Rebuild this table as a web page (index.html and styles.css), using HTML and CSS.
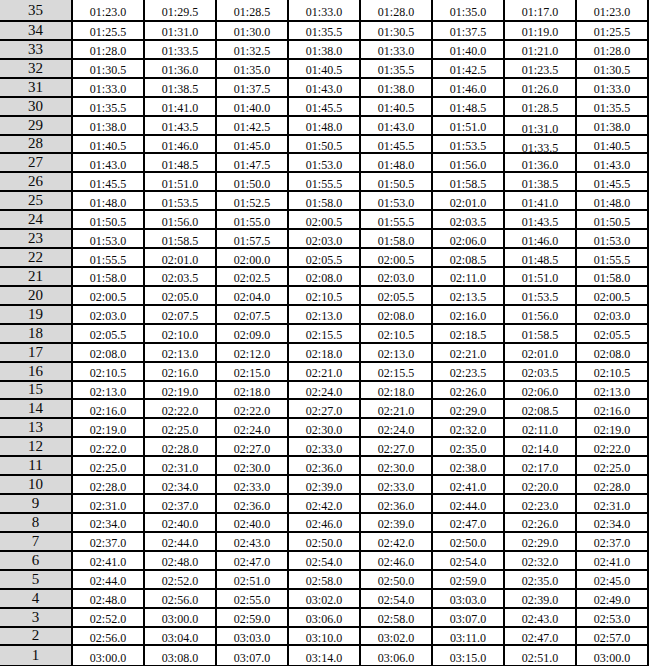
FILE: index.html
```html
<!DOCTYPE html>
<html lang="en">
<head>
<meta charset="utf-8">
<title>Times table</title>
<link rel="stylesheet" href="styles.css">
</head>
<body>
<div class="sheet">
<div class="lbl">35</div><div class="t">01:23.0</div><div class="t">01:29.5</div><div class="t">01:28.5</div><div class="t">01:33.0</div><div class="t">01:28.0</div><div class="t">01:35.0</div><div class="t">01:17.0</div><div class="t">01:23.0</div>
<div class="lbl">34</div><div class="t">01:25.5</div><div class="t">01:31.0</div><div class="t">01:30.0</div><div class="t">01:35.5</div><div class="t">01:30.5</div><div class="t">01:37.5</div><div class="t">01:19.0</div><div class="t">01:25.5</div>
<div class="lbl">33</div><div class="t">01:28.0</div><div class="t">01:33.5</div><div class="t">01:32.5</div><div class="t">01:38.0</div><div class="t">01:33.0</div><div class="t">01:40.0</div><div class="t">01:21.0</div><div class="t">01:28.0</div>
<div class="lbl">32</div><div class="t">01:30.5</div><div class="t">01:36.0</div><div class="t">01:35.0</div><div class="t">01:40.5</div><div class="t">01:35.5</div><div class="t">01:42.5</div><div class="t">01:23.5</div><div class="t">01:30.5</div>
<div class="lbl">31</div><div class="t">01:33.0</div><div class="t">01:38.5</div><div class="t">01:37.5</div><div class="t">01:43.0</div><div class="t">01:38.0</div><div class="t">01:46.0</div><div class="t">01:26.0</div><div class="t">01:33.0</div>
<div class="lbl">30</div><div class="t">01:35.5</div><div class="t">01:41.0</div><div class="t">01:40.0</div><div class="t">01:45.5</div><div class="t">01:40.5</div><div class="t">01:48.5</div><div class="t">01:28.5</div><div class="t">01:35.5</div>
<div class="lbl">29</div><div class="t">01:38.0</div><div class="t">01:43.5</div><div class="t">01:42.5</div><div class="t">01:48.0</div><div class="t">01:43.0</div><div class="t">01:51.0</div><div class="t low">01:31.0</div><div class="t">01:38.0</div>
<div class="lbl">28</div><div class="t">01:40.5</div><div class="t">01:46.0</div><div class="t">01:45.0</div><div class="t">01:50.5</div><div class="t">01:45.5</div><div class="t">01:53.5</div><div class="t low">01:33.5</div><div class="t">01:40.5</div>
<div class="lbl">27</div><div class="t">01:43.0</div><div class="t">01:48.5</div><div class="t">01:47.5</div><div class="t">01:53.0</div><div class="t">01:48.0</div><div class="t">01:56.0</div><div class="t">01:36.0</div><div class="t">01:43.0</div>
<div class="lbl">26</div><div class="t">01:45.5</div><div class="t">01:51.0</div><div class="t">01:50.0</div><div class="t">01:55.5</div><div class="t">01:50.5</div><div class="t">01:58.5</div><div class="t">01:38.5</div><div class="t">01:45.5</div>
<div class="lbl">25</div><div class="t">01:48.0</div><div class="t">01:53.5</div><div class="t">01:52.5</div><div class="t">01:58.0</div><div class="t">01:53.0</div><div class="t">02:01.0</div><div class="t">01:41.0</div><div class="t">01:48.0</div>
<div class="lbl">24</div><div class="t">01:50.5</div><div class="t">01:56.0</div><div class="t">01:55.0</div><div class="t">02:00.5</div><div class="t">01:55.5</div><div class="t">02:03.5</div><div class="t">01:43.5</div><div class="t">01:50.5</div>
<div class="lbl">23</div><div class="t">01:53.0</div><div class="t">01:58.5</div><div class="t">01:57.5</div><div class="t">02:03.0</div><div class="t">01:58.0</div><div class="t">02:06.0</div><div class="t">01:46.0</div><div class="t">01:53.0</div>
<div class="lbl">22</div><div class="t">01:55.5</div><div class="t">02:01.0</div><div class="t">02:00.0</div><div class="t">02:05.5</div><div class="t">02:00.5</div><div class="t">02:08.5</div><div class="t">01:48.5</div><div class="t">01:55.5</div>
<div class="lbl">21</div><div class="t">01:58.0</div><div class="t">02:03.5</div><div class="t">02:02.5</div><div class="t">02:08.0</div><div class="t">02:03.0</div><div class="t">02:11.0</div><div class="t">01:51.0</div><div class="t">01:58.0</div>
<div class="lbl">20</div><div class="t">02:00.5</div><div class="t">02:05.0</div><div class="t">02:04.0</div><div class="t">02:10.5</div><div class="t">02:05.5</div><div class="t">02:13.5</div><div class="t">01:53.5</div><div class="t">02:00.5</div>
<div class="lbl">19</div><div class="t">02:03.0</div><div class="t">02:07.5</div><div class="t">02:07.5</div><div class="t">02:13.0</div><div class="t">02:08.0</div><div class="t">02:16.0</div><div class="t">01:56.0</div><div class="t">02:03.0</div>
<div class="lbl">18</div><div class="t">02:05.5</div><div class="t">02:10.0</div><div class="t">02:09.0</div><div class="t">02:15.5</div><div class="t">02:10.5</div><div class="t">02:18.5</div><div class="t">01:58.5</div><div class="t">02:05.5</div>
<div class="lbl">17</div><div class="t">02:08.0</div><div class="t">02:13.0</div><div class="t">02:12.0</div><div class="t">02:18.0</div><div class="t">02:13.0</div><div class="t">02:21.0</div><div class="t">02:01.0</div><div class="t">02:08.0</div>
<div class="lbl">16</div><div class="t">02:10.5</div><div class="t">02:16.0</div><div class="t">02:15.0</div><div class="t">02:21.0</div><div class="t">02:15.5</div><div class="t">02:23.5</div><div class="t">02:03.5</div><div class="t">02:10.5</div>
<div class="lbl">15</div><div class="t">02:13.0</div><div class="t">02:19.0</div><div class="t">02:18.0</div><div class="t">02:24.0</div><div class="t">02:18.0</div><div class="t">02:26.0</div><div class="t">02:06.0</div><div class="t">02:13.0</div>
<div class="lbl">14</div><div class="t">02:16.0</div><div class="t">02:22.0</div><div class="t">02:22.0</div><div class="t">02:27.0</div><div class="t">02:21.0</div><div class="t">02:29.0</div><div class="t">02:08.5</div><div class="t">02:16.0</div>
<div class="lbl">13</div><div class="t">02:19.0</div><div class="t">02:25.0</div><div class="t">02:24.0</div><div class="t">02:30.0</div><div class="t">02:24.0</div><div class="t">02:32.0</div><div class="t">02:11.0</div><div class="t">02:19.0</div>
<div class="lbl">12</div><div class="t">02:22.0</div><div class="t">02:28.0</div><div class="t">02:27.0</div><div class="t">02:33.0</div><div class="t">02:27.0</div><div class="t">02:35.0</div><div class="t">02:14.0</div><div class="t">02:22.0</div>
<div class="lbl">11</div><div class="t">02:25.0</div><div class="t">02:31.0</div><div class="t">02:30.0</div><div class="t">02:36.0</div><div class="t">02:30.0</div><div class="t">02:38.0</div><div class="t">02:17.0</div><div class="t">02:25.0</div>
<div class="lbl">10</div><div class="t">02:28.0</div><div class="t">02:34.0</div><div class="t">02:33.0</div><div class="t">02:39.0</div><div class="t">02:33.0</div><div class="t">02:41.0</div><div class="t">02:20.0</div><div class="t">02:28.0</div>
<div class="lbl">9</div><div class="t">02:31.0</div><div class="t">02:37.0</div><div class="t">02:36.0</div><div class="t">02:42.0</div><div class="t">02:36.0</div><div class="t">02:44.0</div><div class="t">02:23.0</div><div class="t">02:31.0</div>
<div class="lbl">8</div><div class="t">02:34.0</div><div class="t">02:40.0</div><div class="t">02:40.0</div><div class="t">02:46.0</div><div class="t">02:39.0</div><div class="t">02:47.0</div><div class="t">02:26.0</div><div class="t">02:34.0</div>
<div class="lbl">7</div><div class="t">02:37.0</div><div class="t">02:44.0</div><div class="t">02:43.0</div><div class="t">02:50.0</div><div class="t">02:42.0</div><div class="t">02:50.0</div><div class="t">02:29.0</div><div class="t">02:37.0</div>
<div class="lbl">6</div><div class="t">02:41.0</div><div class="t">02:48.0</div><div class="t">02:47.0</div><div class="t">02:54.0</div><div class="t">02:46.0</div><div class="t">02:54.0</div><div class="t">02:32.0</div><div class="t">02:41.0</div>
<div class="lbl">5</div><div class="t">02:44.0</div><div class="t">02:52.0</div><div class="t">02:51.0</div><div class="t">02:58.0</div><div class="t">02:50.0</div><div class="t">02:59.0</div><div class="t">02:35.0</div><div class="t">02:45.0</div>
<div class="lbl">4</div><div class="t">02:48.0</div><div class="t">02:56.0</div><div class="t">02:55.0</div><div class="t">03:02.0</div><div class="t">02:54.0</div><div class="t">03:03.0</div><div class="t">02:39.0</div><div class="t">02:49.0</div>
<div class="lbl">3</div><div class="t">02:52.0</div><div class="t">03:00.0</div><div class="t">02:59.0</div><div class="t">03:06.0</div><div class="t">02:58.0</div><div class="t">03:07.0</div><div class="t">02:43.0</div><div class="t">02:53.0</div>
<div class="lbl">2</div><div class="t">02:56.0</div><div class="t">03:04.0</div><div class="t">03:03.0</div><div class="t">03:10.0</div><div class="t">03:02.0</div><div class="t">03:11.0</div><div class="t">02:47.0</div><div class="t">02:57.0</div>
<div class="lbl">1</div><div class="t">03:00.0</div><div class="t">03:08.0</div><div class="t">03:07.0</div><div class="t">03:14.0</div><div class="t">03:06.0</div><div class="t">03:15.0</div><div class="t">02:51.0</div><div class="t">03:00.0</div>
</div>
</body>
</html>
```
FILE: styles.css
```css
html, body {
  margin: 0;
  padding: 0;
  background: #ffffff;
}

.sheet {
  display: grid;
  grid-template-columns: 71px repeat(8, 70px);
  grid-template-rows: 20px repeat(33, 16.93px) 19px;
  gap: 2px;
  width: 647px;
  padding: 0 2px 1px 0;
  background: #000000;
  font-family: "Liberation Serif", "Times New Roman", serif;
  color: #0a0a0a;
}

.lbl,
.t {
  display: flex;
  align-items: center;
  justify-content: center;
  white-space: nowrap;
  box-sizing: border-box;
}

.lbl {
  background: #d9d9d9;
  font-size: 15px;
  line-height: 1;
}

.t {
  background: #ffffff;
  font-size: 12px;
  line-height: 1;
  padding-top: 4px;
}

.t.low {
  padding-top: 8px;
}
```
